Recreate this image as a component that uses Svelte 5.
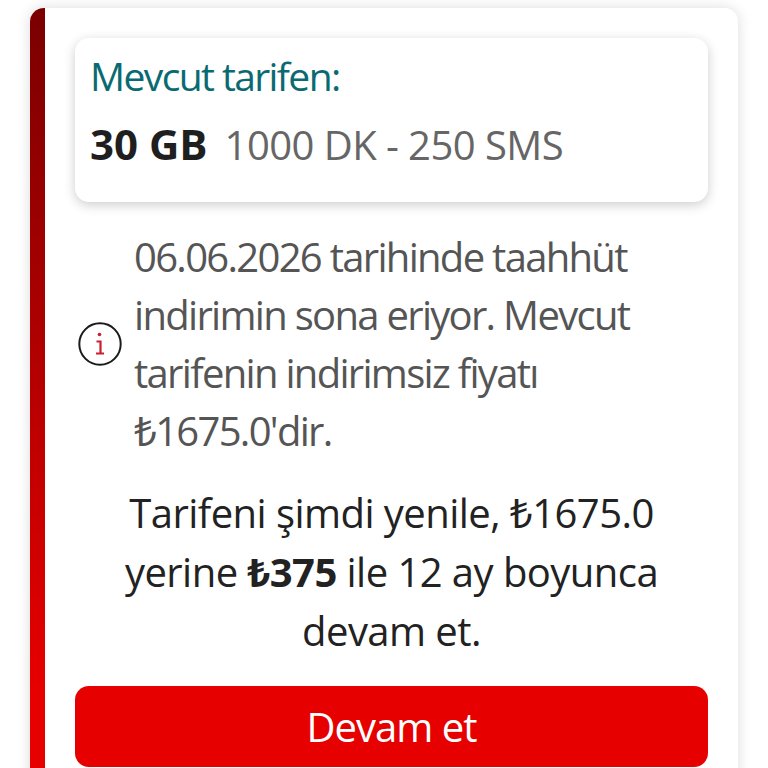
<script>
  const current = { label: 'Mevcut tarifen:', data: '30 GB', rest: '1000 DK - 250 SMS' }
</script>

<div class="page">
  <div class="card">
    <div class="box">
      <div class="label">{current.label}</div>
      <div class="plan"><b>{current.data}</b><span>{current.rest}</span></div>
    </div>

    <div class="notice">
      <svg class="info" viewBox="0 0 44 44" width="44" height="44" aria-hidden="true">
        <circle cx="22" cy="22" r="20.7" fill="none" stroke="#1a1a1a" stroke-width="2" />
        <circle cx="21.5" cy="12.5" r="1.8" fill="#c8202c" />
        <path d="M18.5 19.5h4v11.5M18 31.5h8" fill="none" stroke="#c8202c" stroke-width="2.2" />
      </svg>
      <p>06.06.2026 tarihinde taahhüt indirimin sona eriyor. Mevcut tarifenin indirimsiz fiyatı ₺1675.0'dir.</p>
    </div>

    <p class="offer">Tarifeni şimdi yenile, ₺1675.0 yerine <b>₺375</b> ile 12 ay boyunca devam et.</p>

    <button class="cta">Devam et</button>
  </div>
</div>

<style>
  :global(body) {
    margin: 0;
    background: #fff;
  }
  .page {
    height: 768px;
    overflow: hidden;
    padding: 8px 30px 0;
    box-sizing: border-box;
    font-family: 'Open Sans', 'Noto Sans', sans-serif;
    font-size: 40px;
  }
  .card {
    width: 708px;
    height: 800px;
    box-sizing: border-box;
    border-radius: 14px;
    background:
      linear-gradient(90deg, transparent 15px, #fff 15px),
      linear-gradient(180deg, #7a0000 0, #e60000 85%);
    box-shadow: 0 0 14px rgba(0, 0, 0, 0.14);
    padding: 30px 30px 0 45px;
  }
  .box {
    height: 164px;
    box-sizing: border-box;
    border-radius: 14px;
    background: #fff;
    box-shadow: 0 3px 12px rgba(0, 0, 0, 0.2);
    padding: 13px 15px;
  }
  .label {
    color: #0a6a72;
    font-size: 39px;
    line-height: 50px;
    letter-spacing: -1.6px;
  }
  .plan {
    display: flex;
    align-items: baseline;
    gap: 17px;
    margin-top: 18px;
    line-height: 50px;
    color: #666;
    letter-spacing: -0.55px;
  }
  .plan b {
    color: #1f1f1f;
    font-size: 42px;
    font-weight: 700;
    letter-spacing: 0;
  }
  .notice {
    display: flex;
    align-items: center;
    gap: 12px;
    margin: 26px 0 0 3px;
  }
  .info {
    flex: none;
  }
  .notice p {
    margin: 0;
    width: 510px;
    color: #555;
    line-height: 58px;
    letter-spacing: -1.7px;
  }
  .offer {
    margin: 23px 20px 0;
    text-align: center;
    color: #222;
    line-height: 59px;
    letter-spacing: -0.55px;
  }
  .offer b {
    font-weight: 700;
  }
  .cta {
    display: block;
    width: 100%;
    height: 81px;
    margin-top: 26px;
    border: 0;
    border-radius: 14px;
    background: #e60000;
    color: #fff;
    font: inherit;
    letter-spacing: -1px;
  }
</style>
